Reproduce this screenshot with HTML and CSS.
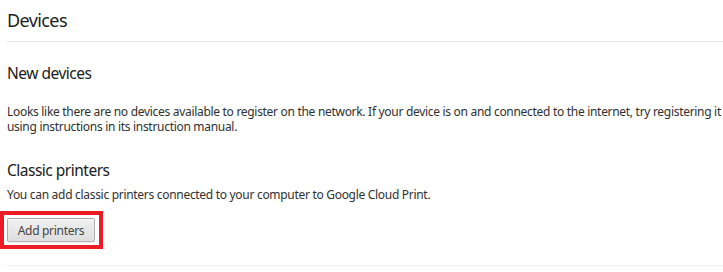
FILE: index.html
```html
<!DOCTYPE html>
<html lang="en-US">
  <head>
    <meta charset="utf-8" />
    <meta name="viewport" content="width=device-width" />
    <title>Devices</title>
    <link rel="stylesheet" href="styles.css">
  </head>
  <body>
    <div class="page">
      <header class="page-header">
        <h1>Devices</h1>
      </header>

      <section class="devices-section">
        <h3>New devices</h3>
        <p class="new-devices-text">
          Looks like there are no devices available to register on the network. If your device is on and connected to the internet, try registering it
          using instructions in its instruction manual.
        </p>
      </section>

      <section class="devices-section">
        <h3>Classic printers</h3>
        <p class="classic-text">You can add classic printers connected to your computer to Google Cloud Print.</p>
        <div class="highlight">
          <button type="button" class="add-printers">Add printers</button>
        </div>
      </section>

      <div class="bottom-rule"></div>
    </div>
  </body>
</html>
```

FILE: styles.css
```css
html {
  font-family: "Noto Sans", sans-serif;
  letter-spacing: -0.3px;
}

body {
  margin: 0;
  background: #fff;
  color: #303030;
}

.page {
  padding-left: 7px;
}

.page-header {
  border-bottom: 1px solid #e6e6e6;
  height: 41px;
}

h1 {
  margin: 0;
  padding-top: 7px;
  font-size: 18px;
  font-weight: normal;
  letter-spacing: -0.6px;
  line-height: 26px;
  color: #202020;
}

.devices-section {
  padding-top: 20px;
}

.devices-section + .devices-section {
  padding-top: 0;
}

h3 {
  margin: 0;
  font-size: 15.5px;
  font-weight: normal;
  letter-spacing: -0.5px;
  line-height: 22px;
  color: #202020;
}

p {
  font-size: 12px;
  line-height: 15px;
}

.new-devices-text {
  margin: 20px 0 25px;
}

.classic-text {
  margin: 6px 0 9px;
}

.highlight {
  display: inline-block;
  margin-left: -7px;
  padding: 3px 4px 3px 3px;
  border: 4px solid #ed1c24;
}

.add-printers {
  display: block;
  width: 88px;
  height: 24px;
  margin: 0;
  padding: 0;
  border: 1px solid rgba(0, 0, 0, 0.25);
  border-radius: 2px;
  background: linear-gradient(#f0f0f0, #dedede);
  box-shadow: 0 1px 0 rgba(0, 0, 0, 0.08), inset 0 1px 2px rgba(255, 255, 255, 0.75);
  font-family: inherit;
  font-size: 12px;
  letter-spacing: -0.3px;
  color: #444;
}

.bottom-rule {
  margin-top: 16px;
  border-top: 1px solid #eee;
}
```
